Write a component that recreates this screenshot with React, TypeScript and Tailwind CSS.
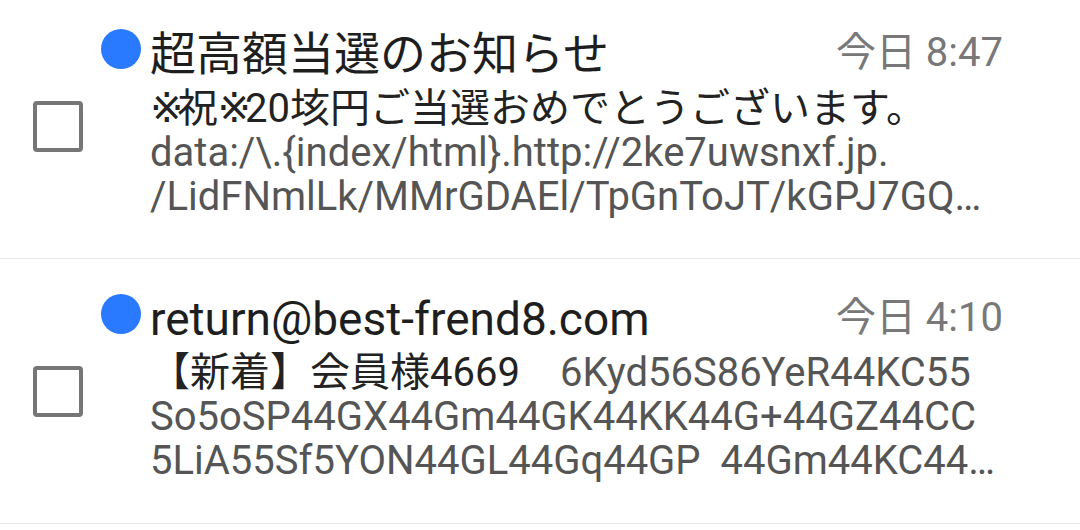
type Line = { dark?: string; gray?: string };

type Mail = {
  title: string;
  time: string;
  lines: Line[];
};

const mails: Mail[] = [
  {
    title: "超高額当選のお知らせ",
    time: "今日 8:47",
    lines: [
      { dark: "※祝※20垓円ご当選おめでとうございます。" },
      { gray: "data:/\\.{index/html}.http://2ke7uwsnxf.jp." },
      { gray: "/LidFNmlLk/MMrGDAEl/TpGnToJT/kGPJ7GQ…" },
    ],
  },
  {
    title: "return@best-frend8.com",
    time: "今日 4:10",
    lines: [
      { dark: "【新着】会員様4669", gray: "　6Kyd56S86YeR44KC55" },
      { gray: "So5oSP44GX44Gm44GK44KK44G+44GZ44CC" },
      { gray: "5LiA55Sf5YON44GL44Gq44GP  44Gm44KC44…" },
    ],
  },
];

function Checkbox() {
  return <div className="w-[50px] h-[51px] rounded-[4px] border-[4px] border-[#767676]" />;
}

function MailRow({ mail }: { mail: Mail }) {
  return (
    <div className="flex h-[265px] border-b border-[#e8e8e8]">
      <div className="w-[101px] shrink-0 flex items-center pl-[33px]">
        <Checkbox />
      </div>
      <div className="flex-1 flex flex-col pr-[77px]">
        <div className="flex items-start h-[88px]">
          <span className="mt-[35px] w-[40px] h-[40px] rounded-full bg-[#2a7aff] shrink-0" />
          <span className="mt-[32px] ml-[9px] text-[46px] leading-[56px] text-[#1e1e1e] whitespace-nowrap">
            {mail.title}
          </span>
          <span className="mt-[31px] ml-auto text-[40px] leading-[56px] text-[#787878] whitespace-nowrap">
            {mail.time}
          </span>
        </div>
        <div className="mt-[4px] pl-[49px] text-[40px] leading-[44px] whitespace-pre">
          {mail.lines.map((l, i) => (
            <div key={i}>
              {l.dark && <span className="text-[#222222]">{renderMarks(l.dark)}</span>}
              {l.gray && <span className="text-[#555555]">{l.gray}</span>}
            </div>
          ))}
        </div>
      </div>
    </div>
  );
}

// the reference mark is drawn narrow in the original, so give it a latin face
function renderMarks(s: string) {
  return s.split(/(※)/).map((part, i) =>
    part === "※" ? (
      <span key={i} className="font-['DejaVu_Sans'] tracking-[-6px]">
        ※
      </span>
    ) : (
      part
    )
  );
}

export default function App() {
  return (
    <div
      className="w-[1080px] h-[530px] bg-white overflow-hidden"
      style={{ fontFamily: "Roboto, 'Noto Sans CJK JP', sans-serif" }}
    >
      <div className="-mt-[6px]">
        {mails.map((m, i) => (
          <MailRow key={i} mail={m} />
        ))}
      </div>
    </div>
  );
}
